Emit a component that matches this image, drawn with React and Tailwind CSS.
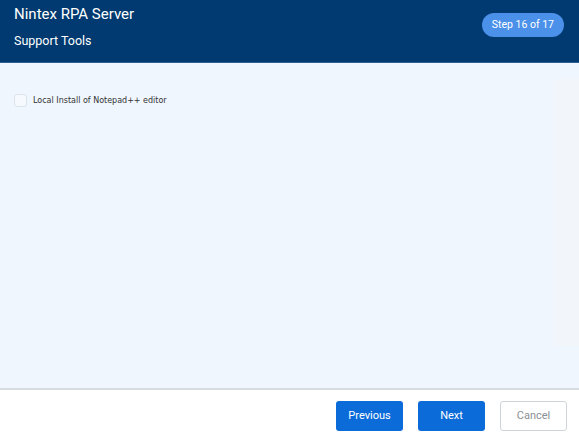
export default function App() {
  return (
    <div
      className="w-[579px] h-[439px] flex flex-col bg-white overflow-hidden"
      style={{ fontFamily: 'Roboto, "Noto Sans", sans-serif' }}
    >
      {/* header */}
      <div className="h-[63px] shrink-0 bg-[#003a70] border-b border-[#2e5f8f] flex justify-between px-[14px]">
        <div className="text-white pt-[4px]">
          <h1 className="text-[15px] leading-[20px]">Nintex RPA Server</h1>
          <p className="text-[12.5px] leading-[16px] mt-[9px]">Support Tools</p>
        </div>
        <div className="pt-[11px] pr-[1px]">
          <span className="inline-block bg-[#4b91ea] text-white text-[10.5px] leading-[24px] px-[10px] rounded-full">
            Step 16 of 17
          </span>
        </div>
      </div>

      {/* body */}
      <div className="flex-1 bg-[#eff6fe] flex">
        <div className="flex-1 pl-[14px] pt-[31px]">
          <label className="flex items-center gap-[6px]">
            <span className="w-[13px] h-[13px] rounded-[3px] border border-[#dde3ea] bg-[#f6f9fd]" />
            <span
              className="text-[8px] text-[#333]"
              style={{ fontFamily: '"DejaVu Sans", sans-serif' }}
            >
              Local Install of Notepad++ editor
            </span>
          </label>
        </div>
        <div className="w-[24px] mt-[16px] mb-[42px] bg-[#f2f5f9]" />
      </div>

      {/* footer */}
      <div className="h-[51px] shrink-0 border-t-2 border-[#d6dbe0] flex justify-end items-start gap-[15px] pr-[12px] pt-[11px]">
        <button className="w-[67px] h-[30px] rounded-[3px] bg-[#0b6bd9] text-white text-[11px]">
          Previous
        </button>
        <button className="w-[67px] h-[30px] rounded-[3px] bg-[#0b6bd9] text-white text-[11px]">
          Next
        </button>
        <button className="w-[67px] h-[30px] rounded-[3px] border border-[#cfd4da] bg-white text-[#8a8f96] text-[11px]">
          Cancel
        </button>
      </div>
    </div>
  );
}
